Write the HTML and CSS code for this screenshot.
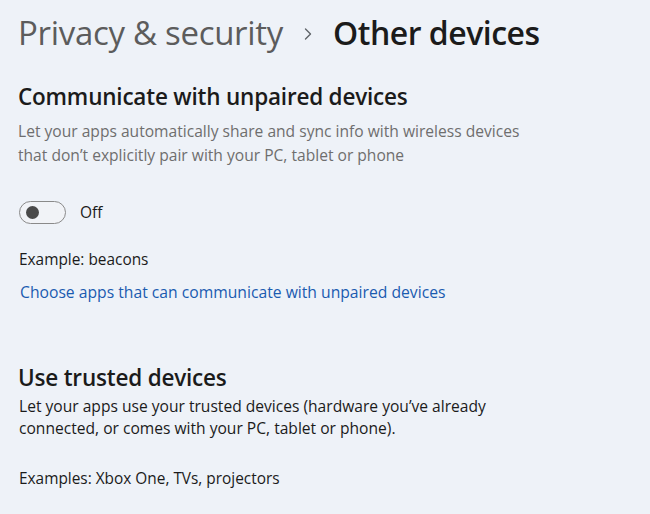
FILE: index.html
```html
<!DOCTYPE html>
<html>
<head>
<meta charset="utf-8">
<link rel="stylesheet" href="styles.css">
</head>
<body>
<div class="page">
  <header class="crumb">
    <span class="crumb-parent">Privacy &amp; security</span>
    <svg class="chev" width="12" height="14" viewBox="0 0 12 14"><path d="M3.5 2 L8.5 7 L3.5 12" fill="none" stroke="#5f6368" stroke-width="1.4" stroke-linecap="round" stroke-linejoin="round"/></svg>
    <span class="crumb-current">Other devices</span>
  </header>

  <section class="sec sec-first">
    <h2 class="sec-title">Communicate with unpaired devices</h2>
    <p class="desc muted">Let your apps automatically share and sync info with wireless devices<br>that don’t explicitly pair with your PC, tablet or phone</p>
    <div class="toggle-row">
      <span class="toggle"><span class="knob"></span></span>
      <span class="toggle-label">Off</span>
    </div>
    <p class="example">Example: beacons</p>
    <a class="link" href="#">Choose apps that can communicate with unpaired devices</a>
  </section>

  <section class="sec sec-second">
    <h2 class="sec-title">Use trusted devices</h2>
    <p class="desc">Let your apps use your trusted devices (hardware you’ve already<br>connected, or comes with your PC, tablet or phone).</p>
    <p class="example ex2">Examples: Xbox One, TVs, projectors</p>
  </section>
</div>
</body>
</html>
```
FILE: styles.css
```css
html, body {
  margin: 0;
  padding: 0;
  background: #eef2f8;
}
body {
  font-family: "Open Sans", "Noto Sans", sans-serif;
  color: #1b1b1b;
  width: 650px;
  height: 514px;
  overflow: hidden;
}
.page {
  padding: 0 0 0 18px;
}
.crumb {
  display: flex;
  align-items: center;
  height: 66px;
}
.crumb-parent {
  font-size: 33px;
  line-height: 40px;
  color: #5c5c5c;
  letter-spacing: -0.3px;
}
.chev {
  margin: 2px 19px 0 19px;
}
.crumb-current {
  font-size: 32px;
  line-height: 40px;
  color: #1b1b1b;
  font-weight: 600;
  letter-spacing: -0.5px;
}
.sec-title {
  margin: 0;
  font-size: 22.5px;
  line-height: 30px;
  font-weight: 600;
  color: #1b1b1b;
  letter-spacing: -0.2px;
}
.sec-first {
  padding-top: 16px;
}
.desc {
  margin: 7px 0 0;
  font-size: 15.6px;
  line-height: 24px;
  color: #1b1b1b;
}
.muted {
  color: #6e6e6e;
}
.toggle-row {
  display: flex;
  align-items: center;
  margin-top: 33px;
  height: 24px;
}
.toggle {
  box-sizing: border-box;
  width: 47px;
  height: 23px;
  border: 1px solid #8a8a8a;
  border-radius: 12px;
  display: flex;
  align-items: center;
  padding-left: 6px;
  margin-left: 1px;
  background: #f1f3f7;
}
.knob {
  width: 13px;
  height: 13px;
  border-radius: 50%;
  background: #4a4a4a;
}
.toggle-label {
  margin-left: 14px;
  font-size: 15.5px;
}
.example {
  margin: 26px 0 0 1px;
  font-size: 15.4px;
  line-height: 20px;
}
.link {
  display: inline-block;
  margin: 12px 0 0 2px;
  font-size: 15.7px;
  line-height: 20px;
  color: #1a5bb0;
  text-decoration: none;
}
.sec-second {
  padding-top: 60px;
}
.sec-second .desc {
  margin-top: 2px;
  margin-left: 1px;
  line-height: 22px;
}
.ex2 {
  margin-top: 30px;
}
```
